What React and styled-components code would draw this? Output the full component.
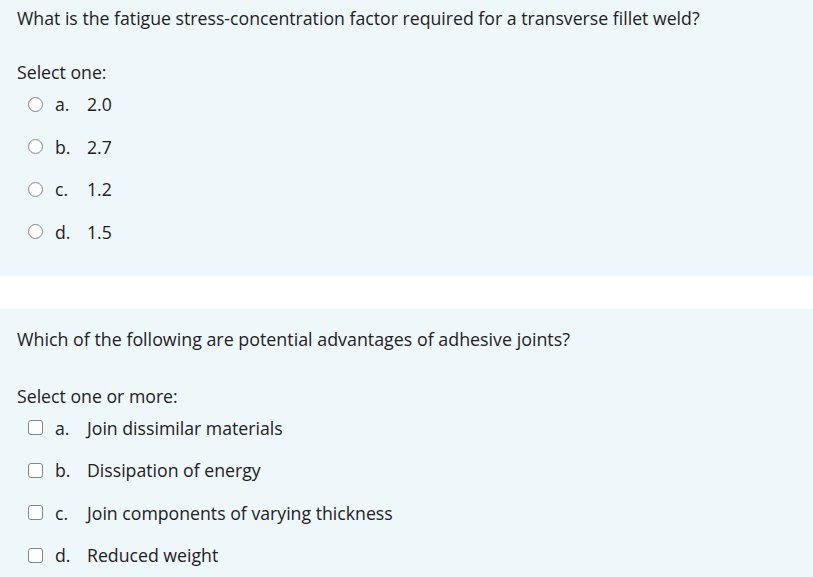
import React from 'react';
import styled, { createGlobalStyle } from 'styled-components';

const Global = createGlobalStyle`
  html, body { margin: 0; padding: 0; background: #fff; }
  body { font-family: "Open Sans", "Noto Sans", sans-serif; color: #1d2125; }
`;

const Page = styled.div`
  display: flex;
  flex-direction: column;
  gap: 33px;
  width: 813px;
`;

const Panel = styled.div`
  background: #eef7fa;
  padding: ${p => p.$top}px 17px ${p => p.$bottom}px 17px;
`;

const Question = styled.div`
  font-size: ${p => p.$size}px;
  line-height: 22px;
`;

const Prompt = styled.div`
  font-size: 17.7px;
  line-height: 22px;
  margin-top: ${p => p.$gap}px;
`;

const Answers = styled.div`
  display: flex;
  flex-direction: column;
  gap: 20.5px;
  margin-top: 10px;
  padding-left: 11px;
`;

const Row = styled.div`
  display: flex;
  align-items: center;
  height: 22px;
  font-size: 17.7px;
  line-height: 22px;
`;

const Radio = styled.span`
  box-sizing: border-box;
  width: 15px;
  height: 15px;
  border: 1.5px solid #80868b;
  border-radius: 50%;
  background: #fff;
  flex: none;
`;

const Check = styled.span`
  box-sizing: border-box;
  width: 15px;
  height: 15px;
  border: 1.5px solid #80868b;
  border-radius: 3px;
  background: #fff;
  flex: none;
`;

const Letter = styled.span`
  margin-left: 12px;
  width: 32px;
  flex: none;
`;

const quiz = [
  {
    q: 'What is the fatigue stress-concentration factor required for a transverse fillet weld?',
    size: 17.7,
    prompt: 'Select one:',
    multi: false,
    opts: ['2.0', '2.7', '1.2', '1.5'],
  },
  {
    q: 'Which of the following are potential advantages of adhesive joints?',
    size: 17.85,
    prompt: 'Select one or more:',
    multi: true,
    opts: ['Join dissimilar materials', 'Dissipation of energy', 'Join components of varying thickness', 'Reduced weight'],
  },
];

function QuestionBlock({ item, top, bottom, gap }) {
  const Box = item.multi ? Check : Radio;
  return (
    <Panel $top={top} $bottom={bottom}>
      <Question $size={item.size}>{item.q}</Question>
      <Prompt $gap={gap}>{item.prompt}</Prompt>
      <Answers>
        {item.opts.map((o, i) => (
          <Row key={i}>
            <Box />
            <Letter>{'abcd'[i]}.</Letter>
            <span>{o}</span>
          </Row>
        ))}
      </Answers>
    </Panel>
  );
}

export default function App() {
  return (
    <>
      <Global />
      <Page>
        <QuestionBlock item={quiz[0]} top={7} bottom={33} gap={32} />
        <QuestionBlock item={quiz[1]} top={19} bottom={30} gap={35} />
      </Page>
    </>
  );
}
